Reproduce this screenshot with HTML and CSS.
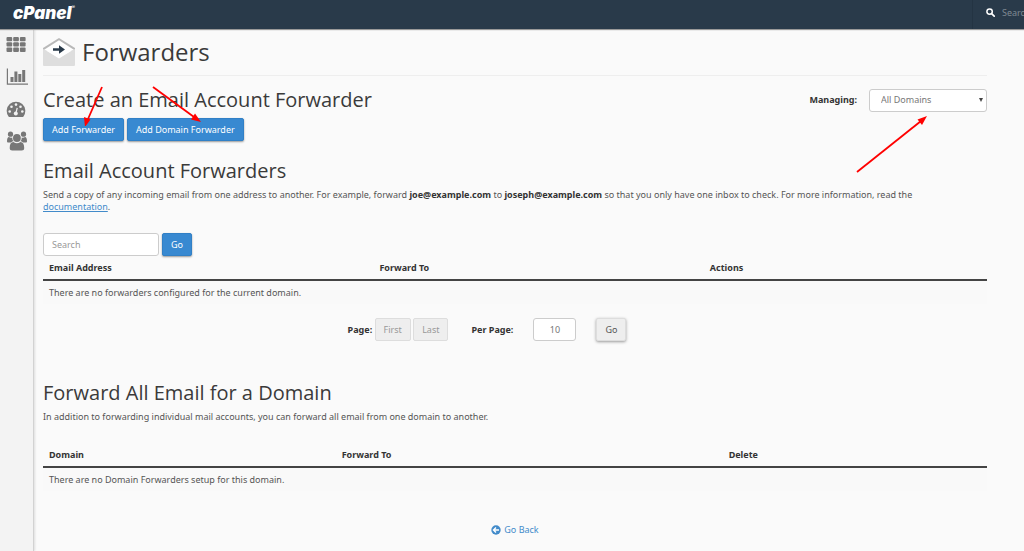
FILE: index.html
```
<!DOCTYPE html>
<html lang="en">
<head>
  <meta charset="UTF-8">
  <meta name="viewport" content="width=device-width, initial-scale=1.0">
  <title>cPanel - Forwarders</title>
  <link rel="stylesheet" href="styles.css">
</head>
<body>

  <header class="topbar">
    <a class="logo" href="#">cPanel<span class="mark">®</span></a>
    <div class="topsearch">
      <svg width="9" height="9" viewBox="0 0 9 9" aria-hidden="true">
        <circle cx="3.6" cy="3.6" r="2.7" fill="none" stroke="#fff" stroke-width="1.5"/>
        <path d="M5.6 5.6 8.2 8.2" stroke="#fff" stroke-width="1.7" stroke-linecap="round"/>
      </svg>
      <input type="text" placeholder="Search Features" aria-label="Search Features">
    </div>
  </header>

  <div class="page">
    <nav class="sidebar">
      <a href="#" aria-label="Home">
        <svg width="22" height="20" viewBox="0 0 22 20" fill="#777">
          <rect x=".5" y="2" width="5.700" height="4.300" rx="1"/><rect x="7.200" y="2" width="5.700" height="4.300" rx="1"/><rect x="13.900" y="2" width="5.700" height="4.300" rx="1"/>
          <rect x=".5" y="7.300" width="5.700" height="4.300" rx="1"/><rect x="7.200" y="7.300" width="5.700" height="4.300" rx="1"/><rect x="13.900" y="7.300" width="5.700" height="4.300" rx="1"/>
          <rect x=".5" y="12.600" width="5.700" height="4.300" rx="1"/><rect x="7.200" y="12.600" width="5.700" height="4.300" rx="1"/><rect x="13.900" y="12.600" width="5.700" height="4.300" rx="1"/>
        </svg>
      </a>
      <a href="#" aria-label="Statistics">
        <svg width="22" height="20" viewBox="0 0 22 20" fill="#777">
          <path d="M.8 1.500h1.200v15h20v1.200H.8z"/>
          <rect x="4.500" y="10" width="3" height="5"/><rect x="8.400" y="4.500" width="3" height="10.500"/><rect x="12.300" y="7" width="3" height="8"/><rect x="16.200" y="3" width="3" height="12"/>
        </svg>
      </a>
      <a href="#" aria-label="Dashboard">
        <svg width="22" height="20" viewBox="0 0 22 20">
          <path d="M2.500 17.500A9.300 9.300 0 1 1 17.500 17.500Q17 18 16.300 18H3.700Q3 18 2.500 17.500Z" fill="#777"/>
          <g fill="#f2f2f2"><circle cx="3.700" cy="12.500" r="1.300"/><circle cx="5.500" cy="7.700" r="1.300"/><circle cx="10" cy="5.600" r="1.300"/><circle cx="14.500" cy="7.700" r="1.300"/><circle cx="16.300" cy="12.500" r="1.300"/><circle cx="9.800" cy="14.600" r="2"/></g>
          <path d="M9.800 14.600 11.200 8.800" stroke="#f2f2f2" stroke-width="1.200"/>
        </svg>
      </a>
      <a href="#" aria-label="Users">
        <svg width="22" height="20" viewBox="0 0 22 20" fill="#777">
          <circle cx="4.500" cy="3.200" r="2.600"/><circle cx="17.500" cy="3.200" r="2.600"/><circle cx="10.900" cy="7" r="3.900"/>
          <path d="M1 10.500C1 7.500 1.600 6 3 6Q4.600 7 6.200 6.400Q6.200 8.800 7.600 10.200Q6 10.200 5 11.500H2Q1 11.500 1 10.500Z"/>
          <path d="M21 10.500C21 7.500 20.400 6 19 6Q17.400 7 15.800 6.400Q15.800 8.800 14.400 10.200Q16 10.200 17 11.500H20Q21 11.500 21 10.500Z"/>
          <path d="M3.700 17C3.700 13 4.900 11 7.400 11Q10.900 13.600 14.400 11C16.900 11 18.200 13 18.200 17Q18.200 19.500 15.700 19.500H6.200Q3.700 19.500 3.700 17Z"/>
        </svg>
      </a>
    </nav>

    <main class="content">
      <div class="title">
        <svg width="32" height="30" viewBox="0 0 32 30" aria-hidden="true">
          <path d="M0 11 16 1 32 11V14H0Z" fill="#b9b9b9"/>
          <path d="M0 12.500 1 12 16 21 31 12 32 12.500V28Q32 29 31 29H1Q0 29 0 28Z" fill="#dedede"/>
          <path d="M1.500 12.500 16 3.200 30.500 12.500 16 21.500Z" fill="#fff"/>
          <path d="M10 11.200h6V8.200l6 4.300-6 4.300v-3h-6z" fill="#293a4a"/>
        </svg>
        <h1>Forwarders</h1>
      </div>

      <section class="create">
        <div>
          <h2>Create an Email Account Forwarder</h2>
          <div class="buttons">
            <button class="btn blue" type="button">Add Forwarder</button>
            <button class="btn blue" type="button">Add Domain Forwarder</button>
          </div>
        </div>
        <div class="managing">
          <label for="domain">Managing:</label>
          <span class="select"><select id="domain"><option>All Domains</option></select></span>
        </div>

        <svg class="arrows left" width="180" height="50" viewBox="0 0 180 50" aria-hidden="true">
          <g stroke="#f00" stroke-width="1.800" fill="#f00">
            <path d="M59 11 45 43"/><path d="M42 51 41 41 47.500 43.500Z" stroke="none"/>
            <path d="M110 11 151 41"/><path d="M158 46 148 43.500 152 37.500Z" stroke="none"/>
          </g>
        </svg>
        <svg class="arrows right" width="80" height="66" viewBox="0 0 80 66" aria-hidden="true">
          <path d="M4 60 68 9" stroke="#f00" stroke-width="1.800"/>
          <path d="M74 4 64.500 7.500 69 13Z" fill="#f00"/>
        </svg>
      </section>

      <section class="accounts">
        <h2>Email Account Forwarders</h2>
        <p>Send a copy of any incoming email from one address to another. For example, forward <b>joe@example.com</b> to <b>joseph@example.com</b> so that you only have one inbox to check. For more information, read the <a class="doc" href="#">documentation</a>.</p>
        <form class="search">
          <input class="field" type="text" placeholder="Search" aria-label="Search">
          <button class="btn blue" type="button">Go</button>
        </form>
        <table class="list">
          <thead>
            <tr><th class="w35">Email Address</th><th class="w35">Forward To</th><th>Actions</th></tr>
          </thead>
          <tbody>
            <tr><td colspan="3">There are no forwarders configured for the current domain.</td></tr>
          </tbody>
        </table>
        <form class="pager">
          <div class="pages">
            <b>Page:</b>
            <button class="btn" type="button" disabled>First</button>
            <button class="btn" type="button" disabled>Last</button>
          </div>
          <label for="perpage">Per Page:</label>
          <input class="field" id="perpage" type="text" value="10">
          <button class="btn grey" type="button">Go</button>
        </form>
      </section>

      <section class="domains">
        <h2>Forward All Email for a Domain</h2>
        <p>In addition to forwarding individual mail accounts, you can forward all email from one domain to another.</p>
        <table class="list">
          <thead>
            <tr><th class="w31">Domain</th><th class="w41">Forward To</th><th>Delete</th></tr>
          </thead>
          <tbody>
            <tr><td colspan="3">There are no Domain Forwarders setup for this domain.</td></tr>
          </tbody>
        </table>
      </section>

      <a class="back" href="#">
        <svg width="10" height="10" viewBox="0 0 10 10" aria-hidden="true">
          <circle cx="5" cy="5" r="4.700" fill="#428bca"/>
          <path d="M8 5H2.600M5 2.500 2.500 5 5 7.500" fill="none" stroke="#fff" stroke-width="1.400"/>
        </svg>
        Go Back
      </a>
    </main>
  </div>

</body>
</html>
```
FILE: styles.css
```
* { box-sizing: border-box; margin: 0; padding: 0; }
body {
  display: flex; flex-direction: column; min-height: 100vh;
  background: #fafafa; color: #555;
  font-family: "Noto Sans", sans-serif; font-size: 9px; line-height: 12px;
}
input, select, button { font: inherit; color: inherit; }
a { color: #428bca; text-decoration: none; }
b, th, label { color: #333; font-weight: bold; }

.topbar {
  position: relative; z-index: 1;
  display: flex; justify-content: space-between;
  height: 29px; background: #293a4a; overflow: hidden;
  box-shadow: 0 1px 1px #999;
}
.logo {
  display: flex; padding: 3px 0 0 13px; color: #fff;
  font-family: Inter, sans-serif; font-size: 17px; line-height: 20px; font-weight: 900; font-style: italic;
}
.mark { font-size: 5px; line-height: 8px; font-weight: 400; }
.topsearch {
  display: flex; align-items: center; gap: 7px;
  width: 52px; padding: 0 0 4px 13px;
  border-left: 1px solid #243443; overflow: hidden;
}
.topsearch svg { flex: none; }
.topsearch input { flex: none; width: 100px; border: 0; background: none; color: #fff; }
.topsearch input::placeholder { color: #7f8992; }

.page { flex: 1; display: flex; }
.sidebar {
  flex: none; display: flex; flex-direction: column; gap: 12px;
  width: 34px; padding: 6px 0 0 6px;
  background: #f3f3f3; border-right: 1px solid #d2d2d2;
  box-shadow: 1px 0 2px #ddd;
}
.sidebar a, .sidebar svg { display: block; height: 20px; }

.content { flex: 1; min-width: 0; padding: 8px 37px 12px 9px; }
.title {
  display: flex; align-items: center; gap: 7px;
  height: 39px; padding-bottom: 9px; border-bottom: 1px solid #eee;
}
h1, h2 { color: #3a3a3a; font-family: "Open Sans", sans-serif; font-weight: 400; }
h1 { font-size: 24px; line-height: 28px; }
h2 { font-size: 20px; line-height: 24px; margin-bottom: 6px; }

.create { position: relative; display: flex; justify-content: space-between; padding-top: 12px; }
.buttons { display: flex; gap: 3px; }
.managing { display: flex; align-items: center; gap: 12px; height: 24px; }
.select { position: relative; }
.select::after {
  content: ""; position: absolute; right: 4px; top: 9px;
  border: 2px solid transparent; border-top: 4px solid #444; border-bottom: 0;
}
select {
  display: block; appearance: none; width: 118px; height: 23px; padding: 0 11px;
  background: #fff; border: 1px solid #ccc; border-radius: 3px; color: #777;
}
.arrows { position: absolute; pointer-events: none; }
.left { left: 0; top: 0; }
.right { right: 54px; top: 36px; }

.btn {
  height: 23px; padding: 0 8px;
  background: #eee; border: 1px solid #ddd; border-radius: 2px;
}
.btn:disabled { color: #999; }
.blue { background: #3889d1; border-color: #3180c6; color: #fff; box-shadow: 0 1px 2px #999; }
.grey { border-color: #ddd; box-shadow: 0 1px 3px #999; }
.field {
  height: 23px; padding: 0 8px;
  background: #fff; border: 1px solid #ccc; border-radius: 3px; color: #777;
}
.field::placeholder { color: #999; }

.accounts { padding-top: 18px; }
.accounts p { padding-right: 40px; }
.doc { text-decoration: underline; }
.search { display: flex; gap: 3px; margin-top: 20px; }
.search .field { width: 116px; }

.list { width: 100%; border-collapse: collapse; table-layout: fixed; }
.list th { height: 24px; padding: 0 6px; text-align: left; border-bottom: 2px solid #444; }
.list td { height: 24px; padding: 0 6px; background: #f9f9f9; }
.w31 { width: 31%; }
.w35 { width: 35%; }
.w41 { width: 41%; }

.pager { display: flex; justify-content: center; align-items: center; gap: 20px; margin-top: 14px; padding-right: 56px; }
.pages { margin-right: 3px; }
.pager .field { width: 43px; text-align: center; }

.domains { padding-top: 40px; }
.domains .list { margin-top: 20px; }

.back { display: flex; justify-content: center; align-items: center; gap: 3px; margin-top: 33px; }
```
